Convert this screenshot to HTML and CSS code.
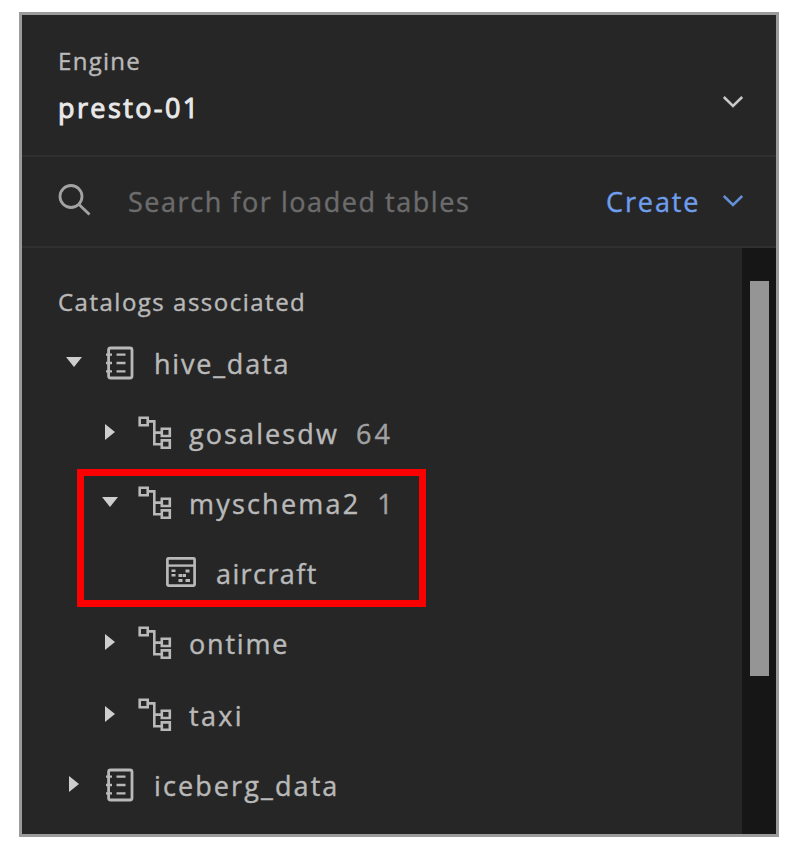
FILE: index.html
```
<!DOCTYPE html>
<html lang="en">
<head>
<meta charset="utf-8">
<title>Engine catalogs</title>
<link rel="stylesheet" href="styles.css">
</head>
<body>
<svg class="defs" width="0" height="0" aria-hidden="true">
  <symbol id="catalog" viewBox="0 0 30 34">
    <g fill="none" stroke="currentColor" stroke-width="2.8">
      <rect x="2.6" y="2" width="23.400" height="30" rx="2"/>
      <path d="M0 8.700h6M0 17h6M0 25.300h6M10.500 8.700h9M10.500 17h9M10.500 25.300h9" stroke-width="2.3"/>
    </g>
  </symbol>
  <symbol id="schema" viewBox="0 0 34 34">
    <g fill="none" stroke="currentColor" stroke-width="2.6">
      <path d="M1.700 1.700h8v7.600h-8zM23.800 12.800h8v7.200h-8zM23.800 24.400h8v7.400h-8zM9.700 5.400h6.600v22.800h7.500M16.300 16.600h7.500"/>
    </g>
  </symbol>
  <symbol id="table" viewBox="0 0 30 30">
    <rect x="1.400" y="1.400" width="27.200" height="27.200" rx="1" fill="none" stroke="currentColor" stroke-width="2.700"/>
    <path d="M1.400 8.600h27.200" stroke="currentColor" stroke-width="2.400"/>
    <path d="M5.500 12.500h4v2.500h-4zM5.500 17h4v2.500h-4zM19.500 12.500h4v3h-4zM12.500 17h4v3h-4zM17 17h3v3h-3zM12.500 22h4v3h-4zM19.500 22h4.500v3h-4.500z" fill="currentColor"/>
  </symbol>
  <symbol id="open" viewBox="0 0 18 12"><path d="M1 1h16L9 11z" fill="currentColor"/></symbol>
  <symbol id="closed" viewBox="0 0 12 18"><path d="M1 1v16l10-8z" fill="currentColor"/></symbol>
  <symbol id="chevron" viewBox="0 0 22 14"><path d="M1.800 2L11 11l9.200-9" fill="none" stroke="currentColor" stroke-width="2.500"/></symbol>
</svg>
<main class="panel">
  <header class="engine">
    <div>
      <div class="label engine-label">Engine</div>
      <div class="engine-name">presto-01</div>
    </div>
    <svg class="chevron"><use href="#chevron"/></svg>
  </header>
  <div class="toolbar">
    <svg class="search-icon" viewBox="0 0 34 34"><g fill="none" stroke="currentColor" stroke-width="2.800"><circle cx="13" cy="13.500" r="11"/><path d="M21 21.500l10.500 10"/></g></svg>
    <span class="placeholder">Search for loaded tables</span>
    <span class="create">Create</span>
    <svg class="chevron create-chevron"><use href="#chevron"/></svg>
  </div>
  <div class="body">
    <div class="tree">
      <div class="label heading">Catalogs associated</div>
      <div class="row">
        <svg class="caret"><use href="#open"/></svg><svg class="icon"><use href="#catalog"/></svg><span class="name hive">hive_data</span>
      </div>
      <div class="row child">
        <svg class="caret"><use href="#closed"/></svg><svg class="icon"><use href="#schema"/></svg><span class="name gosales">gosalesdw</span><span class="count">64</span>
      </div>
      <div class="group">
        <div class="row child">
          <svg class="caret"><use href="#open"/></svg><svg class="icon"><use href="#schema"/></svg><span class="name myschema">myschema2</span><span class="count">1</span>
        </div>
        <div class="row leaf">
          <svg class="icon"><use href="#table"/></svg><span class="name aircraft">aircraft</span>
        </div>
        <div class="highlight"></div>
      </div>
      <div class="row child">
        <svg class="caret"><use href="#closed"/></svg><svg class="icon"><use href="#schema"/></svg><span class="name ontime">ontime</span>
      </div>
      <div class="row child last">
        <svg class="caret"><use href="#closed"/></svg><svg class="icon"><use href="#schema"/></svg><span class="name taxi">taxi</span>
      </div>
      <div class="row">
        <svg class="caret"><use href="#closed"/></svg><svg class="icon"><use href="#catalog"/></svg><span class="name iceberg">iceberg_data</span>
      </div>
    </div>
    <div class="track"><div class="thumb"></div></div>
  </div>
</main>
</body>
</html>
```
FILE: styles.css
```
* { box-sizing: border-box; }
body {
  margin: 0;
  padding: 12px 19px 15px;
  height: 852px;
  background: #fff;
  font: 27px/40px "Open Sans", sans-serif;
  color: #b9b9b9;
  white-space: nowrap;
  -webkit-text-stroke: 0.4px currentColor;
}
.defs { position: absolute; }
svg { display: block; flex: none; }
.panel {
  width: 760px;
  height: 825px;
  border: 3px solid #9b9b9b;
  background: #262626;
  display: flex;
  flex-direction: column;
}
.label { font-size: 24px; }
.engine {
  height: 142px;
  padding: 26px 32px 0 36px;
  border-bottom: 2px solid #303030;
  display: flex;
  justify-content: space-between;
}
.engine-label { letter-spacing: 1.3px; }
.engine-name {
  margin-top: 7px;
  color: #e8e8e8;
  letter-spacing: 2.4px;
  -webkit-text-stroke-width: 1px;
}
.chevron { width: 22px; height: 14px; margin-top: 54px; color: #c8c8c8; }
.toolbar {
  height: 91px;
  padding: 0 32px 0 36px;
  border-bottom: 2px solid #303030;
  display: flex;
  align-items: center;
}
.search-icon { width: 34px; height: 34px; margin: -3px 36px 0 0; color: #a3a3a3; }
.placeholder { width: 478px; color: #6c6c6c; letter-spacing: 1.55px; }
.create { flex: 1; color: #6f9eed; letter-spacing: 1.9px; }
.create-chevron { margin-top: -2px; color: #6490d8; }
.body { flex: 1; display: flex; }
.tree { flex: 1; padding-top: 34px; }
.heading { padding-left: 36px; height: 47px; letter-spacing: 1.5px; }
.row { height: 70px; display: flex; align-items: center; padding-left: 43px; }
.child { padding-left: 79px; }
.last { height: 72px; padding-top: 2px; }
.leaf { padding-left: 143px; }
.caret { width: 18px; height: 18px; margin: -5px 21px 0 0; color: #cecece; }
.child .caret { margin-right: 19px; }
.icon { width: 34px; height: 34px; margin: -3px 16px 0 0; }
.child .icon { margin-right: 17px; }
.leaf .icon { width: 30px; height: 30px; margin: -4px 20px 0 1px; }
.hive { letter-spacing: 1.8px; }
.gosales { letter-spacing: 2.1px; }
.myschema { letter-spacing: 2.2px; }
.aircraft { letter-spacing: 1.4px; }
.ontime { letter-spacing: 1.8px; }
.taxi { letter-spacing: 2.3px; }
.iceberg { letter-spacing: 2.1px; }
.count { margin-left: 17px; color: #a2a2a2; letter-spacing: 3px; }
.group { position: relative; }
.highlight { position: absolute; left: 55px; top: 0; width: 349px; height: 138px; border: 7px solid #fb0000; }
.track { width: 34px; background: #161616; padding: 33px 7px 0 8px; }
.thumb { height: 395px; background: #959595; }
```
